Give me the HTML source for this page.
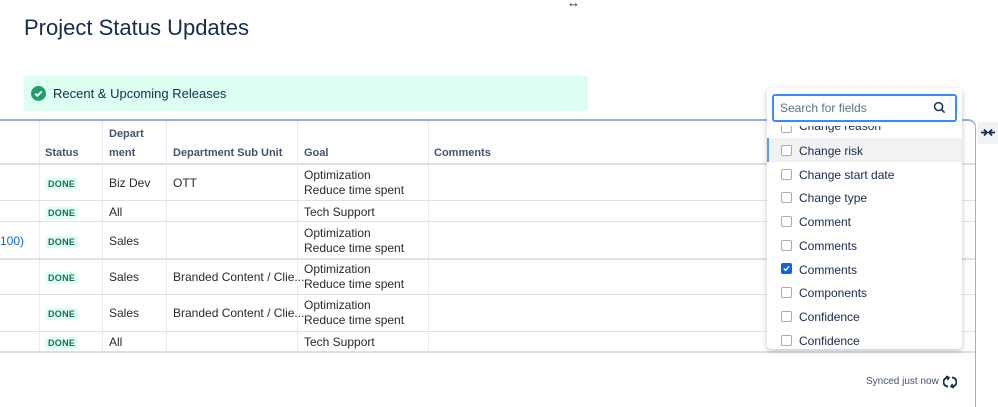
<!DOCTYPE html>
<html><head><meta charset="utf-8"><style>
*{margin:0;padding:0;box-sizing:border-box}
html,body{width:998px;height:407px;overflow:hidden}
body{background:#fff;font-family:"Liberation Sans",sans-serif;color:#172b4d;position:relative}
.a{position:absolute;white-space:nowrap}
.h{font-size:11px;color:#44546f;font-weight:bold}
.c{font-size:12px;color:#292a2e}
.done{position:absolute;font-size:9px;font-weight:bold;color:#216e4e;background:#dcfff1;padding:1px 3px;border-radius:3px;letter-spacing:.3px}
.hl{position:absolute;left:0;width:975px;height:1px;background:#dfe1e6}
.vl{position:absolute;top:121px;width:1px;height:231px;background:#ebecf0}
.it{position:absolute;left:782px;font-size:12px;color:#172b4d}
.cb{position:absolute;left:781px;width:11px;height:11px;border:1.5px solid #a5adba;border-radius:2px;background:#fff}
</style></head><body>
<div class="a" style="left:24px;top:15px;font-size:22px;color:#172b4d">Project Status Updates</div>
<div class="a" style="left:567px;top:-5px;font-size:13px;color:#172b4d;font-weight:bold">↔</div>
<div class="a" style="left:24px;top:76px;width:564px;height:35px;background:#dcfff1"></div>
<svg class="a" style="left:31px;top:86px" width="15" height="15" viewBox="0 0 16 16"><circle cx="8" cy="8" r="8" fill="#22a06b"/><path d="M4.5 8.2l2.3 2.3 4.5-4.7" stroke="#fff" stroke-width="2" fill="none"/></svg>
<div class="a" style="left:53px;top:86px;font-size:13px;color:#172b4d">Recent &amp; Upcoming Releases</div>

<div class="a" style="left:0;top:119px;width:976px;height:288px;border-top:2px solid #8fb0ee;border-right:1.5px solid #8fb0ee;border-top-right-radius:8px"></div>
<div class="vl" style="left:39px"></div><div class="vl" style="left:102px"></div><div class="vl" style="left:166px"></div><div class="vl" style="left:297px"></div><div class="vl" style="left:428px"></div>
<div class="hl" style="top:163px;height:2px"></div><div class="hl" style="top:200px"></div><div class="hl" style="top:221px"></div><div class="hl" style="top:258px;height:2px"></div><div class="hl" style="top:294px"></div><div class="hl" style="top:331px"></div><div class="hl" style="top:351px;height:2px;background:#dcdfe4"></div>

<div class="a h" style="left:45px;top:147px">Status</div>
<div class="a h" style="left:109px;top:128px">Depart</div>
<div class="a h" style="left:109px;top:147px">ment</div>
<div class="a h" style="left:173px;top:147px">Department Sub Unit</div>
<div class="a h" style="left:304px;top:147px">Goal</div>
<div class="a h" style="left:434px;top:147px">Comments</div>

<div class="done" style="left:45px;top:178px">DONE</div><div class="a c" style="left:109px;top:176px">Biz Dev</div><div class="a c" style="left:173px;top:176px">OTT</div><div class="a c" style="left:304px;top:168px;line-height:15px">Optimization<br>Reduce time spent</div>
<div class="done" style="left:45px;top:207px">DONE</div><div class="a c" style="left:109px;top:205px">All</div><div class="a c" style="left:304px;top:205px">Tech Support</div>
<div class="a c" style="left:0;top:234px;color:#0c66e4">100)</div><div class="done" style="left:45px;top:236px">DONE</div><div class="a c" style="left:109px;top:234px">Sales</div><div class="a c" style="left:304px;top:226px;line-height:15px">Optimization<br>Reduce time spent</div>
<div class="done" style="left:45px;top:272px">DONE</div><div class="a c" style="left:109px;top:270px">Sales</div><div class="a c" style="left:173px;top:270px">Branded Content / Clie...</div><div class="a c" style="left:304px;top:262px;line-height:15px">Optimization<br>Reduce time spent</div>
<div class="done" style="left:45px;top:308px">DONE</div><div class="a c" style="left:109px;top:306px">Sales</div><div class="a c" style="left:173px;top:306px">Branded Content / Clie...</div><div class="a c" style="left:304px;top:298px;line-height:15px">Optimization<br>Reduce time spent</div>
<div class="done" style="left:45px;top:337px">DONE</div><div class="a c" style="left:109px;top:335px">All</div><div class="a c" style="left:304px;top:335px">Tech Support</div>

<div class="a" style="left:978px;top:122px;width:20px;height:22px;background:#f1f2f4"></div>
<svg class="a" style="left:980px;top:128px" width="16" height="9" viewBox="0 0 16 9"><path d="M1 4.5h5M4 1.5l3 3-3 3M15 4.5h-5M12 1.5l-3 3 3 3" stroke="#172b4d" stroke-width="1.8" fill="none"/></svg>

<div class="a" style="left:767px;top:88px;width:195px;height:261px;background:#fff;border-radius:4px;box-shadow:0 2px 6px rgba(9,30,66,.25);overflow:hidden">
<div class="a" style="left:0;top:50px;width:195px;height:24px;background:#f1f2f4;border-left:2px solid #579dff"></div>
</div>
<div class="a" style="left:767px;top:126px;width:195px;height:8px;overflow:hidden"><div class="cb" style="left:14px;top:-4px"></div><div class="it" style="left:32px;top:-7px">Change reason</div></div>
<div class="a" style="left:772px;top:94px;width:185px;height:28px;border:2px solid #388bff;border-radius:3px;background:#fff"></div>
<div class="a" style="left:780px;top:101px;font-size:12px;color:#626f86">Search for fields</div>
<svg class="a" style="left:933px;top:101px" width="13" height="13" viewBox="0 0 14 14"><circle cx="6" cy="6" r="4.3" stroke="#172b4d" stroke-width="1.6" fill="none"/><path d="M9.2 9.2l3.3 3.3" stroke="#172b4d" stroke-width="1.6"/></svg>
<div class="cb" style="top:145px"></div><div class="it" style="left:799px;top:144px">Change risk</div>
<div class="cb" style="top:169px"></div><div class="it" style="left:799px;top:168px">Change start date</div>
<div class="cb" style="top:192px"></div><div class="it" style="left:799px;top:191px">Change type</div>
<div class="cb" style="top:216px"></div><div class="it" style="left:799px;top:215px">Comment</div>
<div class="cb" style="top:240px"></div><div class="it" style="left:799px;top:239px">Comments</div>
<div class="cb" style="top:263px;background:#0c66e4;border-color:#0c66e4"></div><svg class="a" style="left:782px;top:264px" width="9" height="9" viewBox="0 0 10 10"><path d="M2 5l2 2 4-4.5" stroke="#fff" stroke-width="1.6" fill="none"/></svg><div class="it" style="left:799px;top:263px">Comments</div>
<div class="cb" style="top:287px"></div><div class="it" style="left:799px;top:286px">Components</div>
<div class="cb" style="top:311px"></div><div class="it" style="left:799px;top:310px">Confidence</div>
<div class="cb" style="top:335px"></div><div class="it" style="left:799px;top:334px">Confidence</div>

<div class="a" style="left:866px;top:376px;font-size:10px;color:#44546f">Synced just now</div>
<svg class="a" style="left:943px;top:375px" width="14" height="14" viewBox="0 0 14 14"><path d="M5 2.5A4.5 4.5 0 0 0 5 11.5M9 2.5A4.5 4.5 0 0 1 9 11.5" stroke="#172b4d" stroke-width="1.8" fill="none"/><path d="M3 1.2l3 1.3-1.6 2.6M11 12.8l-3-1.3 1.6-2.6" stroke="#172b4d" stroke-width="1.6" fill="none"/></svg>
</body></html>
